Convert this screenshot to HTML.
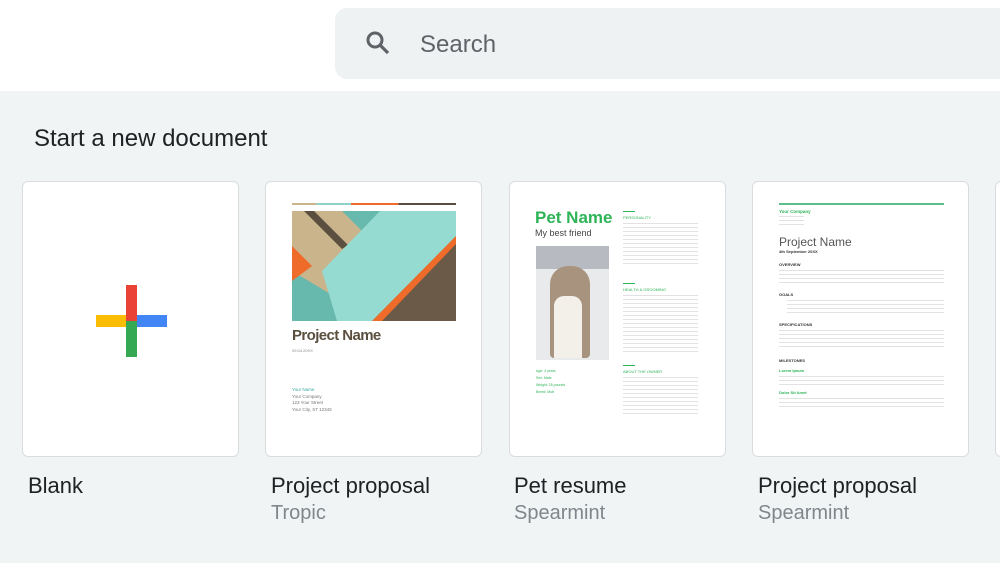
<!DOCTYPE html>
<html><head><style>
*{margin:0;padding:0;box-sizing:border-box}
body{width:1000px;height:563px;overflow:hidden;background:#f0f4f4;font-family:"Liberation Sans",sans-serif;position:relative}
.hdr{position:absolute;left:0;top:0;width:1000px;height:91px;background:#fff}
.search{position:absolute;left:335px;top:8px;width:680px;height:71px;background:#eef2f2;border-radius:12px}
.search span{position:absolute;left:85px;top:23px;font-size:24px;color:#5f6368}
.h{position:absolute;left:34px;top:125px;font-size:24px;color:#202124}
.card{position:absolute;top:181px;width:217px;height:276px;background:#fff;border:1px solid #dadce0;border-radius:6px;overflow:hidden}
.t{position:absolute;top:473px;font-size:22px;color:#202124}
.s{position:absolute;top:502px;font-size:20px;color:#80868b}
.g{background:repeating-linear-gradient(#e2e2e2 0 1px,transparent 1px 4px)}
</style></head><body>
<div class="hdr"></div>
<div class="search">
<svg style="position:absolute;left:30px;top:22px" width="26" height="26" viewBox="0 0 26 26"><circle cx="10" cy="10" r="7" fill="none" stroke="#5f6368" stroke-width="3"/><line x1="15" y1="15" x2="23" y2="23" stroke="#5f6368" stroke-width="3.2"/></svg>
<span>Search</span></div>
<div class="h">Start a new document</div>

<div class="card" style="left:22px">
<div style="position:absolute;left:73px;top:133px;width:37px;height:12px;background:#fbbc04"></div>
<div style="position:absolute;left:108px;top:133px;width:36px;height:12px;background:#4285f4"></div>
<div style="position:absolute;left:103px;top:103px;width:11px;height:36px;background:#ea4335"></div>
<div style="position:absolute;left:103px;top:139px;width:11px;height:36px;background:#34a853"></div>
</div>
<div class="t" style="left:28px">Blank</div>

<div class="card" style="left:265px">
<div style="position:absolute;left:26px;top:21px;width:164px;height:2px;background:linear-gradient(90deg,#c9b48c 0 15%,#8fd3c8 15% 36%,#ee6b2a 36% 65%,#5b4f3f 65%)"></div>
<svg style="position:absolute;left:26px;top:29px" width="164" height="110" viewBox="0 0 164 110"><rect width="164" height="110" fill="#67b8ad"/><polygon points="0,0 50,0 100,50 50,90 0,60" fill="#c9b48c"/><polygon points="0,35 20,55 0,70" fill="#ee6b2a"/><polygon points="12,0 22,0 56,34 50,38" fill="#5b4f3f"/><polygon points="88,0 164,0 164,25 80,110 80,110 45,110 30,60" fill="#95dbd1"/><polygon points="164,25 164,110 80,110" fill="#ee6b2a"/><polygon points="164,33 164,110 90,110" fill="#6b5a48"/></svg>
<div style="position:absolute;left:26px;top:145px;font-size:15px;font-weight:bold;color:#5b4f3f;letter-spacing:-0.6px">Project Name</div>
<div style="position:absolute;left:26px;top:166px;font-size:4px;color:#888">09.04.20XX</div>
<div style="position:absolute;left:26px;top:205px;font-size:4.5px;line-height:6.5px;color:#777"><span style="color:#3aa7a0">Your Name</span><br>Your Company<br>123 Your Street<br>Your City, ST 12345</div>
</div>
<div class="t" style="left:271px">Project proposal</div><div class="s" style="left:271px">Tropic</div>

<div class="card" style="left:509px">
<div style="position:absolute;left:25px;top:26px;font-size:17px;font-weight:bold;color:#2db457">Pet Name</div>
<div style="position:absolute;left:25px;top:46px;font-size:9px;color:#444">My best friend</div>
<div style="position:absolute;left:26px;top:64px;width:73px;height:114px;background:linear-gradient(#b8bac2 0 20%,#e9eaec 20% 100%)"><div style="position:absolute;left:14px;top:20px;width:40px;height:92px;background:#a8937e;border-radius:18px 18px 4px 4px"></div><div style="position:absolute;left:18px;top:50px;width:28px;height:62px;background:#f3f0ea;border-radius:10px 10px 0 0"></div></div>
<div style="position:absolute;left:26px;top:186px;font-size:3.5px;line-height:7px;color:#2db457">Age: 4 years<br>Sex: Male<br>Weight: 25 pounds<br>Breed: Mutt</div>
<div style="position:absolute;left:113px;top:29px;width:75px">
<div style="width:12px;height:1px;background:#2db457"></div><div style="font-size:4px;color:#2db457;margin:3px 0 3px">PERSONALITY</div><div class="g" style="height:42px"></div>
<div style="width:12px;height:1px;background:#2db457;margin-top:18px"></div><div style="font-size:4px;color:#2db457;margin:3px 0 3px">HEALTH &amp; GROOMING</div><div class="g" style="height:60px"></div>
<div style="width:12px;height:1px;background:#2db457;margin-top:10px"></div><div style="font-size:4px;color:#2db457;margin:3px 0 3px">ABOUT THE OWNER</div><div class="g" style="height:38px"></div>
</div></div>
<div class="t" style="left:514px">Pet resume</div><div class="s" style="left:514px">Spearmint</div>

<div class="card" style="left:752px">
<div style="position:absolute;left:26px;top:21px;width:165px;height:2px;background:#5bbf8a"></div>
<div style="position:absolute;left:26px;top:27px;font-size:4.5px;color:#2db457;font-weight:bold">Your Company</div>
<div class="g" style="position:absolute;left:26px;top:34px;width:25px;height:10px"></div>
<div style="position:absolute;left:26px;top:53px;font-size:12px;color:#555">Project Name</div>
<div style="position:absolute;left:26px;top:67px;font-size:4px;color:#333;font-weight:bold">4th September 20XX</div>
<div style="position:absolute;left:26px;top:80px;width:165px;font-size:4px;color:#333;font-weight:bold">
<div>OVERVIEW</div><div class="g" style="height:14px;margin:3px 0 8px"></div>
<div>GOALS</div><div class="g" style="height:14px;margin:3px 0 8px 8px"></div>
<div>SPECIFICATIONS</div><div class="g" style="height:20px;margin:3px 0 8px"></div>
<div>MILESTONES</div><div style="color:#2db457;margin:5px 0 3px">Lorem Ipsum</div><div class="g" style="height:9px;margin-bottom:5px"></div>
<div style="color:#2db457;margin:3px 0 3px">Dolor Sit Amet</div><div class="g" style="height:9px"></div>
</div></div>
<div class="t" style="left:758px">Project proposal</div><div class="s" style="left:758px">Spearmint</div>

<div class="card" style="left:995px"></div>
</body></html>
